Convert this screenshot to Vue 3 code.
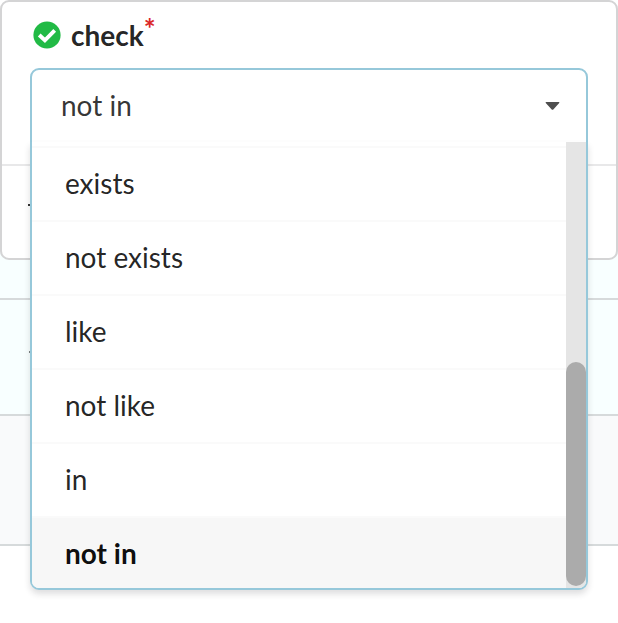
<script setup>
const selected = 'not in'
const options = ['exists', 'not exists', 'like', 'not like', 'in', 'not in']
</script>

<template>
  <main class="page">
    <section class="card">
      <div class="field">
        <label class="label">
          <svg class="status" viewBox="0 0 28 28" aria-hidden="true">
            <circle cx="14" cy="14" r="13.6" fill="#21ba45" />
            <path d="M6.2 14 11.9 19.3 21.7 9.4" fill="none" stroke="#fff" stroke-width="3.9" />
          </svg>
          <span class="name">check</span><span class="required">*</span>
        </label>
        <div class="dropdown">
          <div class="current">
            <span>{{ selected }}</span>
            <svg class="caret" viewBox="0 0 14 8" aria-hidden="true">
              <path d="M.5 0h13q.8.5 0 1.3L7.8 7.5q-.8.6-1.6 0L.5 1.3Q-.3.5.5 0Z" fill="#4e4e4e" />
            </svg>
          </div>
          <div class="menu">
            <div class="options">
              <div
                v-for="option in options"
                :key="option"
                class="option"
                :class="{ active: option === selected }"
              >{{ option }}</div>
            </div>
            <div class="scrollbar"><div class="thumb"></div></div>
          </div>
        </div>
      </div>
      <div class="card-row"><i class="mark"></i></div>
    </section>
    <div class="band gap"></div>
    <div class="band highlight"><i class="mark faint"></i></div>
    <div class="band footer"></div>
  </main>
</template>

<style>
body {
  background: #fff;
}
</style>

<style scoped>
.page,
.page * {
  box-sizing: border-box;
}
.page {
  height: 623px;
  overflow: hidden;
  font-family: Lato, sans-serif;
  font-size: 28px;
  color: rgba(0, 0, 0, 0.87);
  background: linear-gradient(#fff 200px, #f8ffff 200px, #f8ffff 300px, #fff 300px);
}
.card {
  height: 260px;
  border: 2px solid #d4d4d5;
  border-radius: 9px;
  background: #fff;
}
.field {
  position: relative;
  height: 164px;
  padding: 13px 28px 0;
  border-bottom: 2px solid #e8e8e9;
}
.label {
  display: flex;
  align-items: flex-start;
  height: 52px;
  font-weight: 700;
  line-height: 40px;
}
.status {
  width: 28px;
  height: 28px;
  margin: 6px 10px 0 3px;
}
.required {
  color: #db2828;
  margin: -7px 0 0;
}
.dropdown {
  position: absolute;
  z-index: 2;
  top: 66px;
  left: 28px;
  width: 558px;
  height: 522px;
  border: 2px solid #96c8da;
  border-radius: 9px;
  background: #fff;
}
.current {
  display: flex;
  align-items: center;
  justify-content: space-between;
  height: 72px;
  padding: 0 26px 0 29px;
  color: rgba(0, 0, 0, 0.8);
  border-bottom: 2px solid #fdfdfd;
}
.caret {
  width: 15px;
  height: 8px;
  margin-top: 2px;
}
.menu {
  display: flex;
  height: 446px;
  border-radius: 0 0 7px 7px;
  overflow: hidden;
}
.dropdown::after {
  content: '';
  position: absolute;
  z-index: -1;
  inset: 72px -2px -2px;
  border-radius: 0 0 9px 9px;
  box-shadow: 0 4px 6px rgba(34, 36, 38, 0.15);
}
.options {
  flex: 1;
  padding-top: 4px;
}
.option {
  height: 74px;
  padding: 17px 33px 0;
  line-height: 36px;
  border-top: 2px solid #fafafa;
}
.option.active {
  font-weight: 700;
  color: rgba(0, 0, 0, 0.95);
  background: #f7f7f7;
}
.scrollbar {
  display: flex;
  align-items: flex-end;
  width: 20px;
  padding-bottom: 2px;
  background: #e5e5e5;
}
.thumb {
  width: 20px;
  height: 224px;
  border-radius: 10px;
  background: #ababab;
}
.card-row {
  padding: 38px 0 0 26px;
}
.mark {
  display: block;
  width: 3px;
  height: 2px;
  background: #333;
}
.band {
  border-bottom: 2px solid #d6dadb;
}
.gap {
  height: 40px;
  background: #f8ffff;
}
.highlight {
  height: 116px;
  padding: 51px 0 0 29px;
  background: #f8ffff;
}
.mark.faint {
  width: 2px;
  background: #7b8282;
}
.footer {
  height: 130px;
  background: #f9fafb;
}
</style>
